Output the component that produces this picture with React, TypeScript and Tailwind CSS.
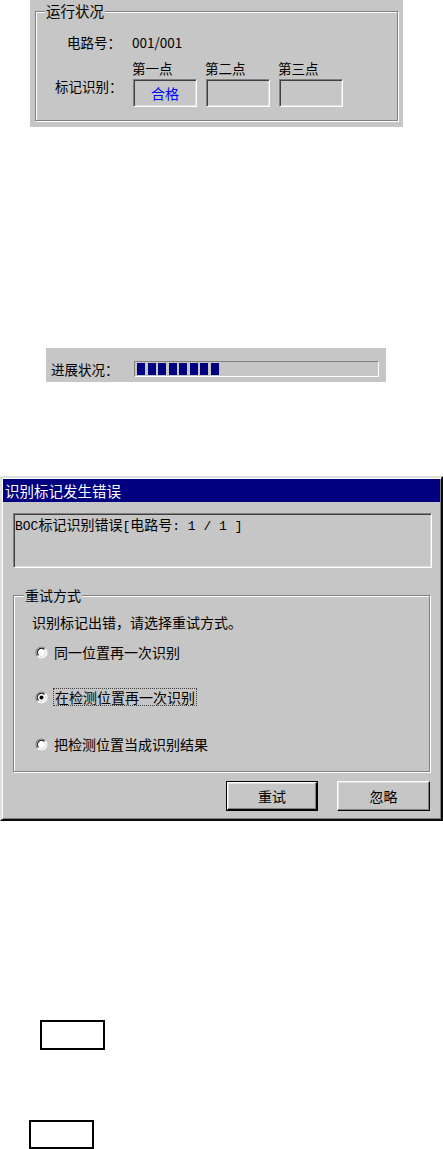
import React from 'react';

const etched = 'border border-[#808080] shadow-[inset_1px_1px_0_#ffffff,1px_1px_0_#ffffff]';
const sunken =
  'border border-t-[#808080] border-l-[#808080] border-r-white border-b-white shadow-[inset_1px_1px_0_#404040,inset_-1px_-1px_0_#dfdfdf]';
const sunkenThin = 'border border-t-[#808080] border-l-[#808080] border-r-white border-b-white';
const raised =
  'border border-t-white border-l-white border-r-[#0a0a0a] border-b-[#0a0a0a] shadow-[inset_-1px_-1px_0_#808080,inset_1px_1px_0_#dfdfdf]';

const Radio: React.FC<{ checked?: boolean }> = ({ checked }) => (
  <svg width="13" height="13" viewBox="0 0 13 13" className="shrink-0">
    <circle cx="6.5" cy="6.5" r="5.5" fill="#ffffff" />
    <path d="M10.4 2.6 A5.5 5.5 0 0 0 2.6 10.4" fill="none" stroke="#808080" strokeWidth="1.2" />
    <path d="M9.4 3.6 A4.1 4.1 0 0 0 3.6 9.4" fill="none" stroke="#101010" strokeWidth="1.1" />
    <path d="M2.6 10.4 A5.5 5.5 0 0 0 10.4 2.6" fill="none" stroke="#f4f4f4" strokeWidth="1.2" />
    <path d="M3.6 9.4 A4.1 4.1 0 0 0 9.4 3.6" fill="none" stroke="#d8d8d8" strokeWidth="1" />
    {checked && <circle cx="6.5" cy="6.5" r="2" fill="#000000" />}
  </svg>
);

const PointBox: React.FC<{ title: string; value?: string }> = ({ title, value }) => (
  <div className="flex flex-col w-[64px]">
    <div className="leading-[16px] -ml-[1px]">{title}</div>
    <div className={`mt-[3px] h-[28px] flex items-center justify-center text-[#0000ff] text-[14px] ${sunken}`}>
      {value}
    </div>
  </div>
);

const App: React.FC = () => {
  return (
    <div className="w-[443px] h-[1149px] bg-white text-black font-['Noto_Sans_CJK_SC','Liberation_Sans',sans-serif] overflow-hidden">
      {/* 运行状况 */}
      <div className="ml-[30px] w-[373px] h-[127px] bg-[#c6c6c6] pt-[11px] pl-[5px] text-[13.5px]">
        <div className={`relative w-[363px] h-[110px] ${etched}`}>
          <span className="absolute -top-[9px] left-[9px] px-[1px] bg-[#c6c6c6] leading-[16px] text-[14.5px]">运行状况</span>
          <div className="pt-[22px]">
            <div className="flex items-center h-[16px] pl-[31px]">
              <span className="w-[65px]">电路号：</span>
              <span>001/001</span>
            </div>
            <div className="flex mt-[10px] pl-[19px]">
              <span className="w-[78px] pt-[18px] leading-[16px]">标记识别：</span>
              <div className="flex gap-[9px]">
                <PointBox title="第一点" value="合格" />
                <PointBox title="第二点" />
                <PointBox title="第三点" />
              </div>
            </div>
          </div>
        </div>
      </div>

      {/* 进展状况 */}
      <div className="mt-[221px] ml-[46px] w-[340px] h-[34px] bg-[#c6c6c6] pt-[13px] text-[13.5px]">
        <div className="flex items-center h-[16px] pl-[5px]">
          <span className="w-[83px]">进展状况：</span>
          <div className={`w-[245px] h-[16px] pt-[1px] pl-[2px] flex gap-[2.5px] ${sunkenThin}`}>
            {Array.from({ length: 8 }).map((_, i) => (
              <div key={i} className="w-[8px] h-[12px] bg-[#000080]" />
            ))}
          </div>
        </div>
      </div>

      {/* 错误对话框 */}
      <div className="mt-[94px] w-[443px] h-[345px] bg-[#c6c6c6] border-2 border-t-[#dfdfdf] border-l-[#dfdfdf] border-r-[#0a0a0a] border-b-[#0a0a0a] shadow-[inset_1px_1px_0_#ffffff,inset_-1px_-1px_0_#808080] p-[1px] text-[14px]">
        <div className="h-[23px] bg-[#000080] text-white flex items-center pl-[2px] text-[14.5px]">识别标记发生错误</div>
        <div className={`mt-[11px] ml-[10px] w-[419px] h-[55px] pl-[1px] pt-[2px] ${sunken}`}>
          <div className="leading-[16px] font-['Liberation_Mono','Noto_Sans_CJK_SC',monospace] text-[13px]">
            BOC<span className="font-['Noto_Sans_CJK_SC',sans-serif] text-[14px]">标记识别错误</span>[
            <span className="font-['Noto_Sans_CJK_SC',sans-serif] text-[14px]">电路号</span>: 1 / 1 ]
          </div>
        </div>

        <div className={`relative mt-[27px] ml-[10px] w-[417px] h-[177px] ${etched}`}>
          <span className="absolute -top-[9px] left-[10px] px-[1px] bg-[#c6c6c6] leading-[16px]">重试方式</span>
          <div className="pt-[18px] pl-[18px] leading-[16px]">识别标记出错，请选择重试方式。</div>
          <div className="flex items-center h-[18px] mt-[13px] pl-[21px]">
            <Radio />
            <span className="ml-[5px] px-[1px]">同一位置再一次识别</span>
          </div>
          <div className="flex items-center h-[18px] mt-[27px] pl-[21px]">
            <Radio checked />
            <span className="ml-[5px] px-[1px] h-[18px] flex items-center border border-dotted border-[#404040]">
              在检测位置再一次识别
            </span>
          </div>
          <div className="flex items-center h-[18px] mt-[29px] pl-[21px]">
            <Radio />
            <span className="ml-[5px] px-[1px]">把检测位置当成识别结果</span>
          </div>
        </div>

        <div className="flex justify-end gap-[19px] mt-[9px] pr-[10px]">
          <div className="w-[92px] h-[30px] border border-black">
            <button className={`w-full h-full flex items-center justify-center bg-[#c6c6c6] ${raised}`}>重试</button>
          </div>
          <button className={`w-[93px] h-[30px] flex items-center justify-center bg-[#c6c6c6] ${raised}`}>忽略</button>
        </div>
      </div>

      {/* 空白框 */}
      <div className="mt-[199px] ml-[40px] w-[65px] h-[30px] border-2 border-black" />
      <div className="mt-[70px] ml-[29px] w-[65px] h-[29px] border-2 border-black" />
    </div>
  );
};

export default App;
